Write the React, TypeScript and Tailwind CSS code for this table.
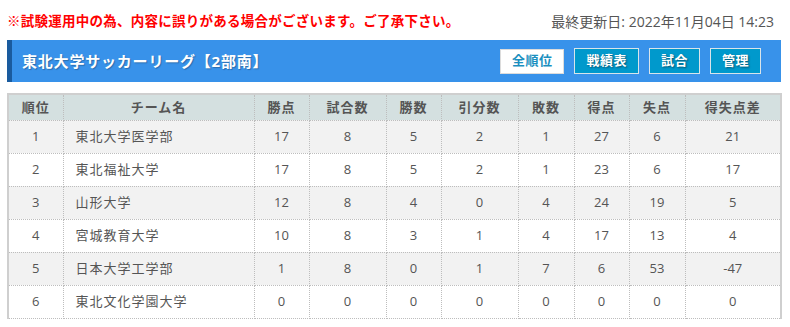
import React from 'react';

interface TeamRow {
  rank: number;
  name: string;
  points: number;
  played: number;
  won: number;
  drawn: number;
  lost: number;
  goalsFor: number;
  goalsAgainst: number;
  diff: number;
}

const rows: TeamRow[] = [
  { rank: 1, name: '東北大学医学部', points: 17, played: 8, won: 5, drawn: 2, lost: 1, goalsFor: 27, goalsAgainst: 6, diff: 21 },
  { rank: 2, name: '東北福祉大学', points: 17, played: 8, won: 5, drawn: 2, lost: 1, goalsFor: 23, goalsAgainst: 6, diff: 17 },
  { rank: 3, name: '山形大学', points: 12, played: 8, won: 4, drawn: 0, lost: 4, goalsFor: 24, goalsAgainst: 19, diff: 5 },
  { rank: 4, name: '宮城教育大学', points: 10, played: 8, won: 3, drawn: 1, lost: 4, goalsFor: 17, goalsAgainst: 13, diff: 4 },
  { rank: 5, name: '日本大学工学部', points: 1, played: 8, won: 0, drawn: 1, lost: 7, goalsFor: 6, goalsAgainst: 53, diff: -47 },
  { rank: 6, name: '東北文化学園大学', points: 0, played: 0, won: 0, drawn: 0, lost: 0, goalsFor: 0, goalsAgainst: 0, diff: 0 },
];

const columns = [
  { label: '順位', width: 'w-[55px]' },
  { label: 'チーム名', width: 'w-[191px]' },
  { label: '勝点', width: 'w-[55px]' },
  { label: '試合数', width: 'w-[77px]' },
  { label: '勝数', width: 'w-[55px]' },
  { label: '引分数', width: 'w-[77px]' },
  { label: '敗数', width: 'w-[56px]' },
  { label: '得点', width: 'w-[55px]' },
  { label: '失点', width: 'w-[56px]' },
  { label: '得失点差', width: 'w-[96px]' },
];

const NavButton: React.FC<{ label: string; active?: boolean }> = ({ label, active }) => (
  <button
    className={
      active
        ? 'h-[25px] px-[11px] border border-[#dcdcdc] bg-white text-[13px] font-bold text-[#1a8fc0] tracking-[0.5px]'
        : 'h-[26px] px-[11px] border border-[#d8e4ea] bg-[#0099cc] text-[13px] font-bold text-white tracking-[0.5px] [text-shadow:1px_1px_2px_rgba(0,0,0,0.45)]'
    }
  >
    {label}
  </button>
);

const cell = 'border border-dotted border-[#bdbdbd] text-center';

export default function App() {
  return (
    <div className="w-[790px] h-[327px] bg-white px-[7px] pt-[13px] font-['Open_Sans','Noto_Sans_CJK_JP',sans-serif]">
      <div className="flex items-center justify-between h-[18px] pr-[9px]">
        <span className="text-[13.5px] font-bold text-[#ff0000] leading-none tracking-[0.25px]">
          ※試験運用中の為、内容に誤りがある場合がございます。ご了承下さい。
        </span>
        <span className="text-[14px] text-[#555] leading-none">最終更新日: 2022年11月04日 14:23</span>
      </div>

      <div className="mt-[9px] h-[42px] flex items-center justify-between bg-[#3892ea] border-l-[5px] border-[#1a5b9e] pl-[10px] pr-[20px] w-[774px]">
        <h1 className="text-[15px] font-bold text-white tracking-[0.8px] [text-shadow:1px_1px_1px_rgba(0,0,0,0.25)]">
          東北大学サッカーリーグ【2部南】
        </h1>
        <div className="flex items-center gap-[10px]">
          <NavButton label="全順位" active />
          <NavButton label="戦績表" />
          <NavButton label="試合" />
          <NavButton label="管理" />
        </div>
      </div>

      <table className="mt-[11px] w-[773px] table-fixed border-collapse border-x-2 border-t-2 border-x-[#cfcfcf] border-t-[#cfcfcf] text-[13px] text-[#555]">
        <colgroup>
          {columns.map(c => (
            <col key={c.label} className={c.width} />
          ))}
        </colgroup>
        <thead>
          <tr className="h-[26px] bg-[#d4e0e0]">
            {columns.map(c => (
              <th key={c.label} className={`${cell} font-bold tracking-[1px] text-[#555]`}>
                {c.label}
              </th>
            ))}
          </tr>
        </thead>
        <tbody>
          {rows.map((r, i) => (
            <tr key={r.rank} className={i % 2 === 0 ? 'h-[33px] bg-[#f2f2f2]' : 'h-[33px] bg-white'}>
              <td className={cell}>{r.rank}</td>
              <td className={`${cell} text-left pl-[12px] tracking-[1px]`}>{r.name}</td>
              <td className={cell}>{r.points}</td>
              <td className={cell}>{r.played}</td>
              <td className={cell}>{r.won}</td>
              <td className={cell}>{r.drawn}</td>
              <td className={cell}>{r.lost}</td>
              <td className={cell}>{r.goalsFor}</td>
              <td className={cell}>{r.goalsAgainst}</td>
              <td className={cell}>{r.diff}</td>
            </tr>
          ))}
        </tbody>
      </table>
    </div>
  );
}
